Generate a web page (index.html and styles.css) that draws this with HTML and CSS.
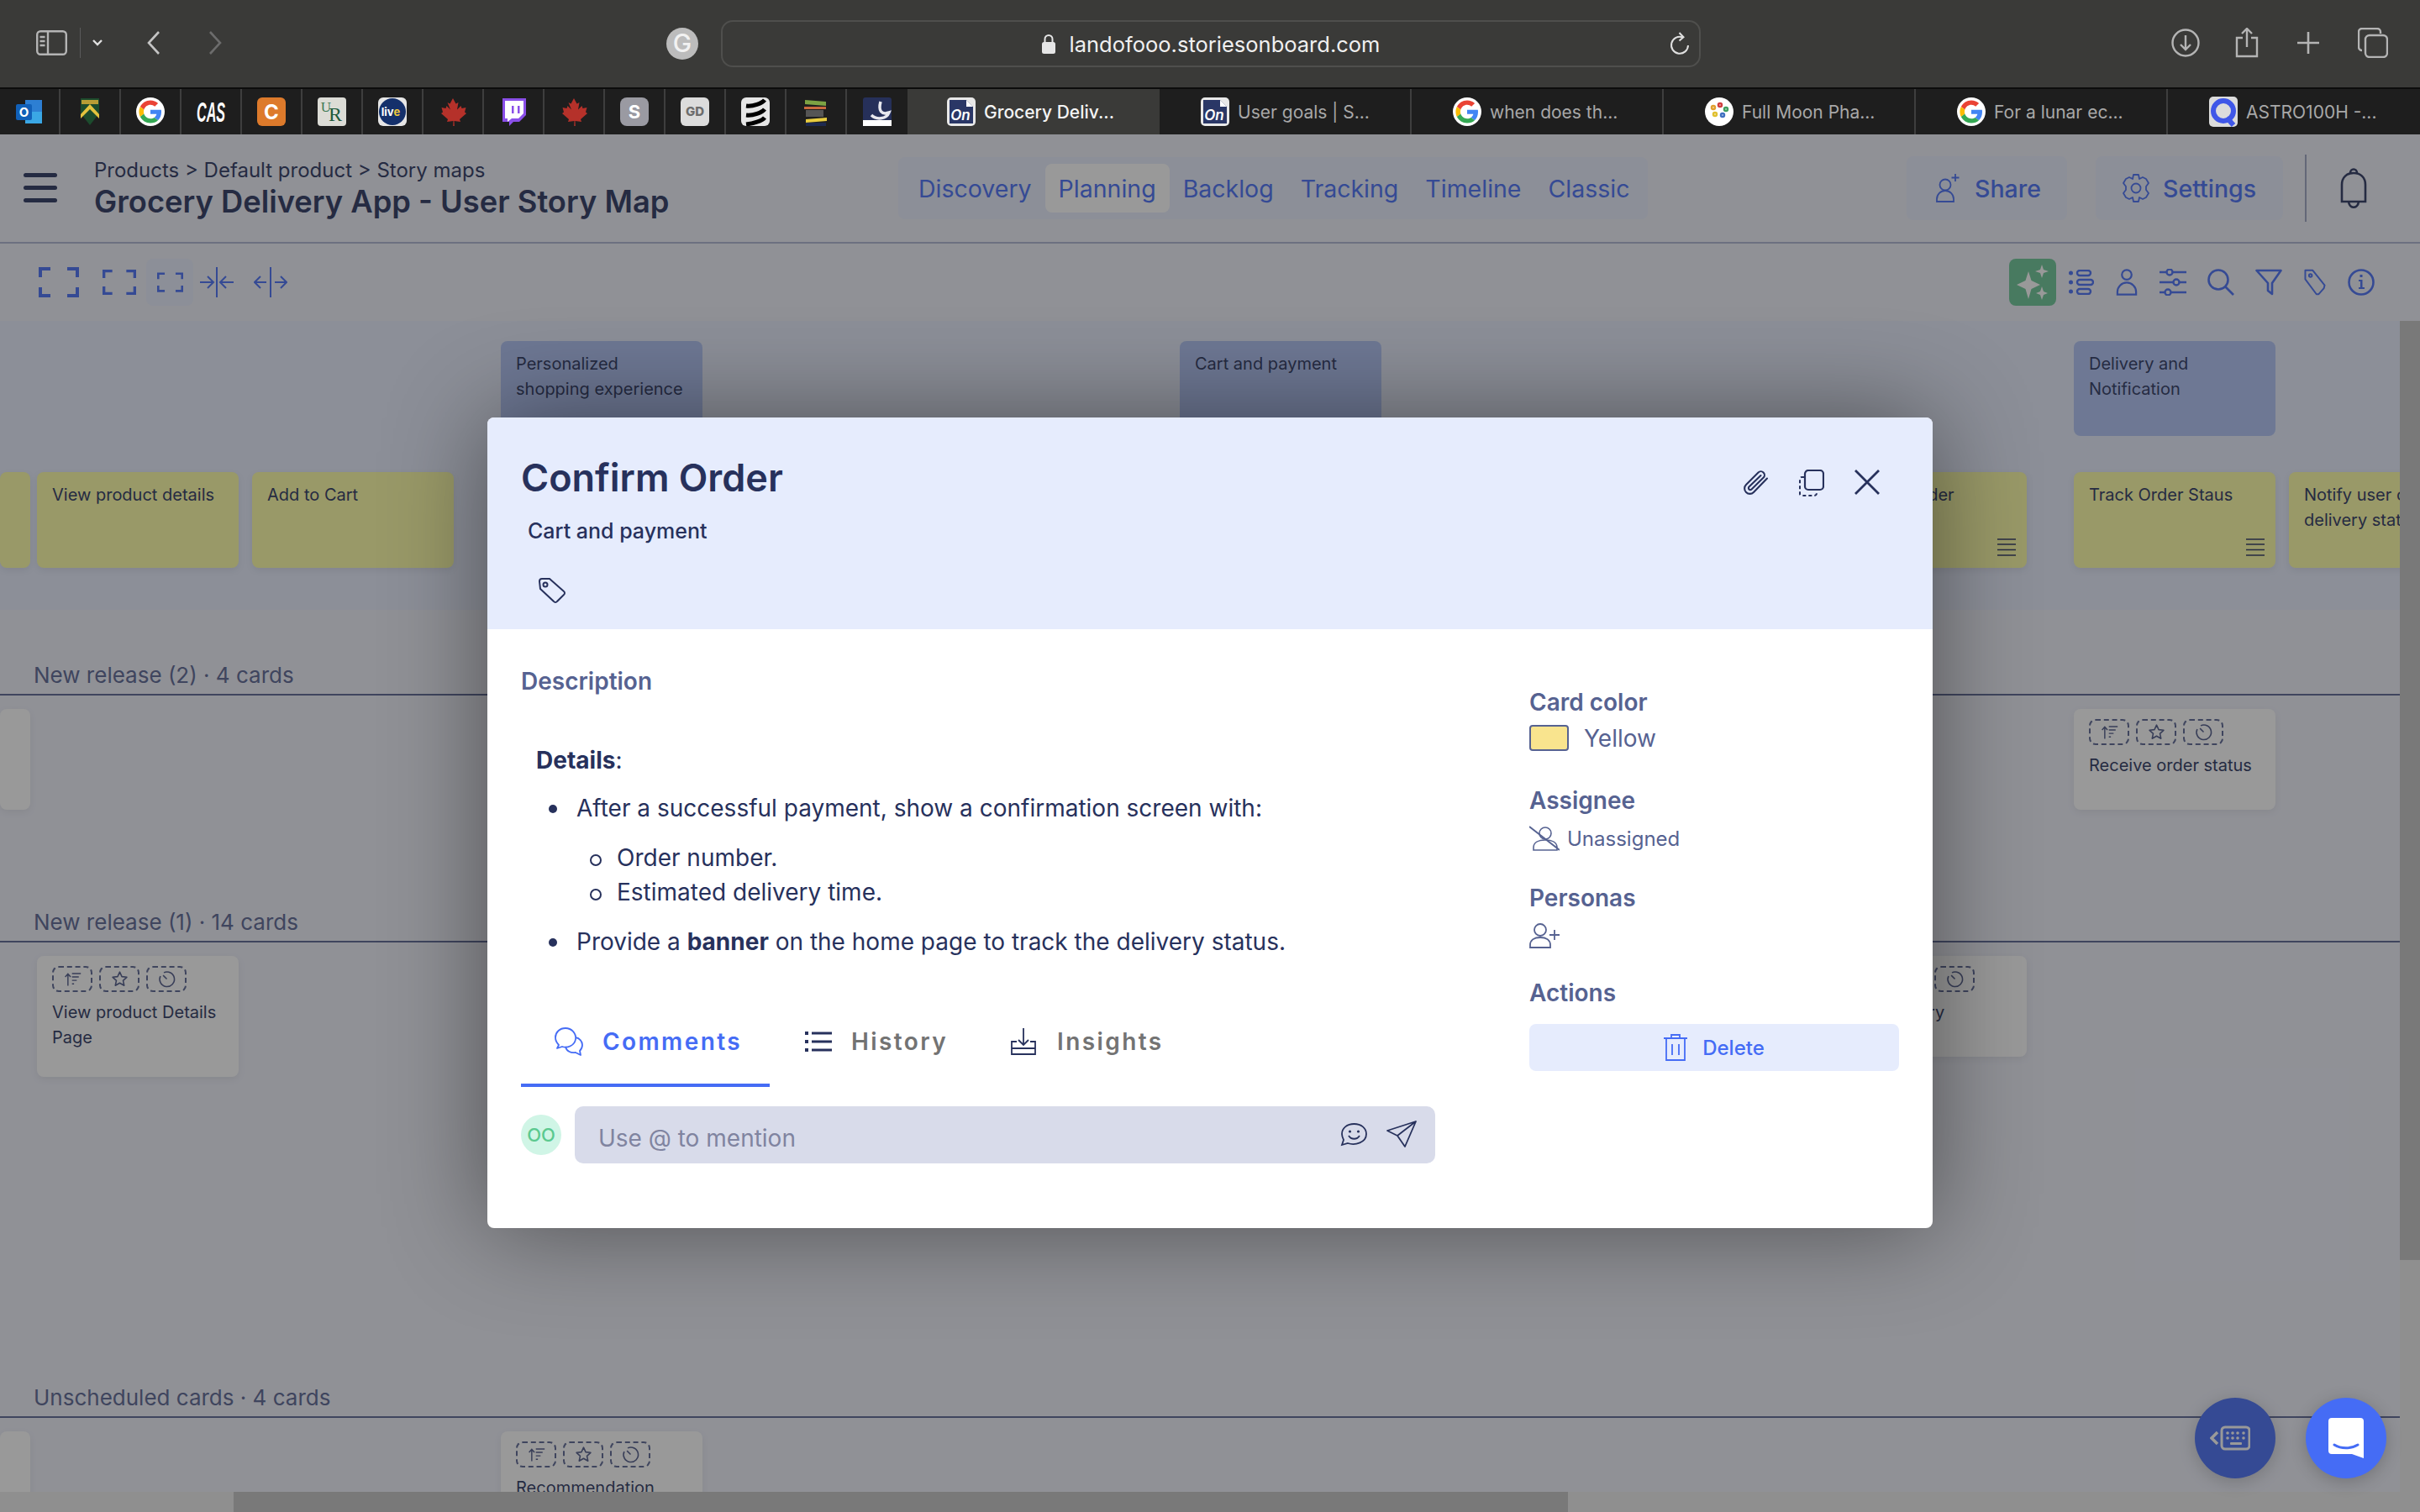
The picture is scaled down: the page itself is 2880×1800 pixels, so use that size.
FILE: index.html
```html
<!DOCTYPE html>
<html lang="en">
<head>
<meta charset="utf-8">
<title>Grocery Delivery App - User Story Map</title>
<link rel="stylesheet" href="styles.css">
</head>
<body>
<svg class="defs" xmlns="http://www.w3.org/2000/svg">
  <symbol id="google" viewBox="-6 -6 60 60"><circle cx="24" cy="24" r="30" fill="#fff"/><path fill="#EA4335" d="M24 9.500c3.540 0 6.710 1.220 9.210 3.600l6.850-6.850C35.900 2.380 30.470 0 24 0 14.620 0 6.510 5.380 2.560 13.220l7.980 6.190C12.430 13.720 17.740 9.500 24 9.500z"/><path fill="#4285F4" d="M46.980 24.550c0-1.570-.15-3.090-.38-4.550H24v9.020h12.940c-.58 2.960-2.260 5.480-4.780 7.180l7.730 6c4.510-4.180 7.090-10.360 7.090-17.65z"/><path fill="#FBBC05" d="M10.530 28.590c-.48-1.450-.76-2.990-.76-4.590s.27-3.140.76-4.590l-7.980-6.190C.92 16.460 0 20.120 0 24c0 3.880.92 7.540 2.560 10.780l7.970-6.190z"/><path fill="#34A853" d="M24 48c6.480 0 11.930-2.130 15.890-5.810l-7.730-6c-2.150 1.450-4.920 2.300-8.160 2.300-6.260 0-11.570-4.220-13.470-9.910l-7.980 6.190C6.510 42.620 14.620 48 24 48z"/></symbol>
  <symbol id="onfav" viewBox="0 0 34 34"><rect width="34" height="34" rx="5" fill="#e8e8e8"/><path d="M3 3h20l8 8v20H3z" fill="#2a3766"/><path d="M23 3l8 8h-8z" fill="#fff"/><text x="16" y="27" font-family="Inter" font-size="17" font-style="italic" font-weight="600" fill="#fff" text-anchor="middle">On</text></symbol>
  <symbol id="maple" viewBox="0 0 34 34"><path fill="#b5312a" d="M17 1l3.500 6.500 3-1.500-1.500 8.500 4.500-4.500 1 3 5-1-1.500 5.500 2 1.500-8 7 1 3-7.500-1 .3 7h-1.600l.3-7-7.500 1 1-3-8-7 2-1.500-1.500-5.500 5 1 1-3 4.500 4.500L10.500 6l3 1.500z"/></symbol>
  <symbol id="chip-sort" viewBox="0 0 26 22"><g fill="none" stroke="currentColor" stroke-width="1.800"><path d="M6 21V4M2 8l4-4.500L10 8"/><path d="M12 3h13M12 8h10M12 13h7M12 18h3"/></g></symbol>
  <symbol id="chip-star" viewBox="0 0 24 24"><path fill="none" stroke="currentColor" stroke-width="1.800" stroke-linejoin="round" d="M12 2.500l2.900 6.200 6.700.8-5 4.600 1.400 6.700-6-3.400-6 3.400 1.400-6.700-5-4.600 6.700-.8z"/></symbol>
  <symbol id="chip-clock" viewBox="0 0 24 24"><g fill="none" stroke="currentColor" stroke-width="1.800"><path d="M8 3.300A10 10 0 1 1 3.300 8"/><path d="M7 7l5 5"/></g></symbol>
  <symbol id="lines" viewBox="0 0 22 21"><path stroke="currentColor" stroke-width="1.500" d="M0 1h22M0 7h22M0 13.500h22M0 20h22"/></symbol>
  <symbol id="brackets" viewBox="0 0 48 36"><g fill="none" stroke="currentColor" stroke-width="4"><path d="M14 2H2v10M34 2h12v10M2 24v10h12M46 24v10H34"/></g></symbol>
  <symbol id="collapse" viewBox="0 0 40 36"><g fill="none" stroke="currentColor" stroke-width="2"><path d="M20 0v36M0 18h15M9 11l7 7-7 7M40 18H25M31 11l-7 7 7 7"/></g></symbol>
  <symbol id="expand" viewBox="0 0 40 36"><g fill="none" stroke="currentColor" stroke-width="2"><path d="M20 0v36M15 18H1M8 11l-7 7 7 7M25 18h14M32 11l7 7-7 7"/></g></symbol>
  <symbol id="person" viewBox="0 0 28 36"><g fill="none" stroke="currentColor" stroke-width="2.500"><circle cx="14" cy="8" r="6.500"/><path d="M1.500 34.500V31a12.500 12.500 0 0 1 25 0v3.500z"/></g></symbol>
  <symbol id="tag" viewBox="0 0 30 36"><g fill="none" stroke="currentColor" stroke-width="2.200" stroke-linejoin="round"><path d="M2 2h10l16 20-1 4-7 8-3 0L2 14z"/><circle cx="9" cy="9" r="2"/></g></symbol>
  <symbol id="close" viewBox="0 0 30 30"><path fill="none" stroke="currentColor" stroke-width="2.800" d="M1 1l28 28M29 1L1 29"/></symbol>
</svg>

<div class="chrome">
  <div class="toolbar-b">
    <div class="tb-left">
      <svg class="ic-sidebar" width="37" height="30" viewBox="0 0 37 30"><g fill="none" stroke="#b4b4b4" stroke-width="2.400"><rect x="1.200" y="1.200" width="34.600" height="27.600" rx="4"/><path d="M14 1v28"/></g><path stroke="#b4b4b4" stroke-width="2.400" d="M4.500 8h6M4.500 13h6M4.500 18h6"/></svg>
      <span class="tb-sep"></span>
      <svg class="ic-caret" width="12" height="8" viewBox="0 0 12 8"><path fill="none" stroke="#e0e0e0" stroke-width="2.400" d="M1 1l5 5 5-5"/></svg>
      <svg class="ic-back" width="16" height="28" viewBox="0 0 16 28"><path fill="none" stroke="#c4c4c4" stroke-width="2.600" d="M14 1L2 14l12 13"/></svg>
      <svg class="ic-fwd" width="16" height="28" viewBox="0 0 16 28"><path fill="none" stroke="#6c6c6c" stroke-width="2.600" d="M2 1l12 13L2 27"/></svg>
    </div>
    <svg class="ic-g" width="38" height="38" viewBox="0 0 38 38"><circle cx="19" cy="19" r="19" fill="#bcbcbc"/><text x="19" y="29" font-family="Inter" font-size="30" font-weight="500" fill="#f2f2f2" text-anchor="middle">G</text></svg>
    <div class="url">
      <span></span>
      <span class="url-mid">
        <svg width="16" height="24" viewBox="0 0 16 24"><path fill="none" stroke="#e6e6e6" stroke-width="2" d="M3.500 11V6.500a4.500 4.500 0 0 1 9 0V11"/><rect y="10" width="16" height="14" rx="2.500" fill="#e6e6e6"/></svg>
        <span>landofooo.storiesonboard.com</span>
      </span>
      <svg class="ic-reload" width="24" height="28" viewBox="0 0 24 28"><g fill="none" stroke="#e0e0e0" stroke-width="2"><path d="M15.500 6.400A10 10 0 1 0 22 16"/><path d="M11.500 1l5 5.200-5 4.300"/></g></svg>
    </div>
    <div class="tb-right">
      <svg width="34" height="34" viewBox="0 0 34 34"><g fill="none" stroke="#b4b4b4" stroke-width="2.400"><circle cx="17" cy="17" r="15.500"/><path d="M17 8v17M11 19l6 6 6-6"/></g></svg>
      <svg width="28" height="36" viewBox="0 0 28 36"><g fill="none" stroke="#b4b4b4" stroke-width="2.400"><path d="M9 12H2v22h24V12h-7"/><path d="M14 23V2M8 7l6-6 6 6"/></g></svg>
      <svg width="28" height="26" viewBox="0 0 28 26"><path stroke="#b4b4b4" stroke-width="2.600" d="M14 0v26M1 13h26"/></svg>
      <svg width="36" height="36" viewBox="0 0 36 36"><g fill="none" stroke="#b4b4b4" stroke-width="2.400"><rect x="9" y="9" width="26" height="26" rx="5"/><path d="M5 27a4 4 0 0 1-4-4V5a4 4 0 0 1 4-4h18a4 4 0 0 1 4 4v2"/></g></svg>
    </div>
  </div>
  <div class="tabbar">
    <span class="pin"><svg width="34" height="34" viewBox="0 0 34 34"><path d="M12 3l20 0v28H12z" fill="#2d7fd3"/><path d="M12 17h20v14H12z" fill="#3aa7e5"/><rect x="1" y="8" width="19" height="19" rx="2" fill="#1160b8"/><text x="10.500" y="23" font-family="Inter" font-size="15" font-weight="700" fill="#fff" text-anchor="middle">O</text></svg></span>
    <span class="pin"><svg width="34" height="34" viewBox="0 0 34 34"><path d="M6 1h22v18l-11 14L6 19z" fill="#1c4b2d"/><path d="M17 8L28 20v5L17 14 6 25v-5z" fill="#e3c23e"/><path d="M7 3h20v5H7z" fill="#b89c35"/></svg></span>
    <span class="pin"><svg width="34" height="34"><use href="#google"/></svg></span>
    <span class="pin"><svg width="36" height="36" viewBox="0 0 36 36"><text x="1" y="30" font-family="Liberation Sans" font-size="34" font-weight="700" font-style="italic" fill="#fff" textLength="34" lengthAdjust="spacingAndGlyphs">CAS</text></svg></span>
    <span class="pin"><svg width="34" height="34" viewBox="0 0 34 34"><rect width="34" height="34" rx="6" fill="#dd7a2b"/><text x="17" y="26" font-family="Inter" font-size="24" font-weight="700" fill="#fff" text-anchor="middle">C</text></svg></span>
    <span class="pin"><svg width="34" height="34" viewBox="0 0 34 34"><rect width="34" height="34" rx="4" fill="#dcdcd6"/><text x="10" y="17" font-family="Liberation Serif" font-size="17" fill="#3d7a55" text-anchor="middle">U</text><text x="21" y="28" font-family="Liberation Serif" font-size="24" fill="#1e5a3a" text-anchor="middle">R</text></svg></span>
    <span class="pin"><svg width="34" height="34" viewBox="0 0 34 34"><rect width="34" height="34" rx="6" fill="#e6e6e6"/><circle cx="17" cy="17" r="16" fill="#14306b"/><text x="15" y="22" font-family="Inter" font-size="13" font-weight="700" fill="#fff" text-anchor="middle">liv<tspan fill="#f0c93a">e</tspan></text></svg></span>
    <span class="pin"><svg width="34" height="34"><use href="#maple"/></svg></span>
    <span class="pin"><svg width="34" height="34" viewBox="0 0 34 34"><path d="M4 1h28v20l-8 8h-7l-5 5v-5H4z" fill="#8a4fe8"/><path d="M7 4h22v15l-6 6H15l-5 4v-4H7z" fill="#fff"/><path d="M15 10h2.500v9H15zM22 10h2.500v9H22z" fill="#8a4fe8"/></svg></span>
    <span class="pin"><svg width="34" height="34"><use href="#maple"/></svg></span>
    <span class="pin"><svg width="34" height="34" viewBox="0 0 34 34"><rect width="34" height="34" rx="8" fill="#9a9aa2"/><text x="17" y="25" font-family="Inter" font-size="22" font-weight="700" fill="#fff" text-anchor="middle">S</text></svg></span>
    <span class="pin"><svg width="34" height="34" viewBox="0 0 34 34"><rect width="34" height="34" rx="6" fill="#dcdcdc"/><text x="17" y="22" font-family="Inter" font-size="15" font-weight="800" fill="#6d6d6d" text-anchor="middle">GD</text></svg></span>
    <span class="pin"><svg width="34" height="34" viewBox="0 0 34 34"><rect width="34" height="34" rx="6" fill="#e6e6e6"/><path fill="none" stroke="#000" stroke-width="5" d="M6 10C14 11 25 7 28 3M6 21c8 1 19-3 22-7M6 32c8-1 19-4 22-8"/></svg></span>
    <span class="pin"><svg width="34" height="34" viewBox="0 0 34 34"><path fill="#7da343" d="M4 3l25 2v5L4 8z"/><path fill="#c96a3e" d="M3 11h26v3H3z"/><path fill="#555" d="M5 15h21v8H5z"/><path fill="#e8cc3f" d="M5 26l25-2v4l-25 2z"/><path fill="#1d2950" d="M5 30h24v4H5z"/></svg></span>
    <span class="pin"><svg width="34" height="34" viewBox="0 0 34 34"><rect width="34" height="34" rx="3" fill="#26305a"/><path fill="none" stroke="#e8e8ee" stroke-width="3.500" d="M21 5c-3 11 1 16 10 13-3 8-15 9-21 3"/><path fill="#fff" d="M0 27h34v7H0z"/></svg></span>
    <span class="tab tab-active"><svg width="34" height="36"><use href="#onfav"/></svg><span>Grocery Deliv...</span></span>
    <span class="tab"><svg width="34" height="36"><use href="#onfav"/></svg><span>User goals | S...</span></span>
    <span class="tab"><svg width="34" height="34"><use href="#google"/></svg><span>when does th...</span></span>
    <span class="tab"><svg width="34" height="34" viewBox="0 0 34 34"><circle cx="17" cy="17" r="17" fill="#fff"/><g fill="none" stroke-width="2.500"><circle cx="10" cy="12" r="2" stroke="#e0a030"/><circle cx="18" cy="9" r="2" stroke="#d04040"/><circle cx="25" cy="14" r="2" stroke="#40a060"/><circle cx="12" cy="20" r="2" stroke="#e0c030"/><circle cx="21" cy="21" r="2" stroke="#4070c0"/></g></svg><span>Full Moon Pha...</span></span>
    <span class="tab"><svg width="34" height="34"><use href="#google"/></svg><span>For a lunar ec...</span></span>
    <span class="tab"><svg width="34" height="36" viewBox="0 0 34 36"><rect width="34" height="36" rx="5" fill="#dcdcdc"/><circle cx="17" cy="17" r="12" fill="none" stroke="#3f57e8" stroke-width="6"/><path d="M21 25l8 9" stroke="#3f57e8" stroke-width="6"/></svg><span>ASTRO100H -...</span></span>
  </div>
</div>

<div class="page">
  <header class="hdr">
    <div class="hdr-left">
      <div class="burger"><span></span><span></span><span></span></div>
      <div class="hdr-titles">
        <div class="crumbs">Products &gt; Default product &gt; Story maps</div>
        <h1 class="map-title">Grocery Delivery App - User Story Map</h1>
      </div>
    </div>
    <nav class="views">
      <span class="view">Discovery</span>
      <span class="view view-on">Planning</span>
      <span class="view">Backlog</span>
      <span class="view">Tracking</span>
      <span class="view">Timeline</span>
      <span class="view">Classic</span>
    </nav>
    <div class="hdr-right">
      <span class="hbtn hbtn-share"><svg width="28" height="34" viewBox="0 0 28 34"><g fill="none" stroke="currentColor" stroke-width="1.800"><circle cx="11" cy="13" r="6.500"/><path d="M1 33v-3a10 10 0 0 1 20 0v3zM23 0v9M18.500 4.500h9"/></g></svg>Share</span>
      <span class="hbtn hbtn-set"><svg width="32" height="34" viewBox="0 0 32 34"><g fill="none" stroke="currentColor" stroke-width="1.800" stroke-linejoin="round"><circle cx="16" cy="17" r="5.500"/><path d="M13 1h6l1 5 4-2 4 2 3 5-3 4v4l3 4-3 5-4 2-4-2-1 5h-6l-1-5-4 2-4-2-3-5 3-4v-4L1 11l3-5 4-2 4 2z"/></g></svg>Settings</span>
      <span class="hdr-div"></span>
      <svg class="bell" width="32" height="48" viewBox="0 0 32 48"><g fill="none" stroke="#27315c" stroke-width="2.600"><path d="M2 40V20C2 11 8 6 16 6s14 5 14 14v20z"/><path d="M12 6c0-6 8-6 8 0M10 40c1 9 11 9 12 0"/></g></svg>
    </div>
  </header>

  <div class="tools">
    <div class="tools-left">
      <svg width="48" height="36"><use href="#brackets"/></svg>
      <svg class="t-b2" width="40" height="30"><use href="#brackets"/></svg>
      <span class="t-hl"><svg width="31" height="24"><use href="#brackets"/></svg></span>
      <svg width="40" height="36"><use href="#collapse"/></svg>
      <svg class="t-ex" width="40" height="36"><use href="#expand"/></svg>
    </div>
    <div class="tools-right">
      <span class="t-ai"><svg width="38" height="42" viewBox="0 0 38 42"><path fill="#fff" d="M14 8l3.500 11L28 24l-10.500 5L14 41l-3.500-12L0 24l10.500-5zM30 0l2 6 6 2-6 2-2 6-2-6-6-2 6-2zM30 26l2 6 5 2-5 2-2 6-2-6-5-2 5-2z"/></svg></span>
      <svg class="t-list" width="30" height="30" viewBox="0 0 30 30"><g fill="none" stroke="currentColor" stroke-width="2.400"><rect x="10" y="1" width="16" height="6" rx="3"/><rect x="10" y="12" width="19" height="6" rx="3"/><rect x="10" y="23" width="16" height="6" rx="3"/></g><g fill="currentColor"><circle cx="2.500" cy="4" r="2.500"/><circle cx="2.500" cy="15" r="2.500"/><circle cx="2.500" cy="26" r="2.500"/></g></svg>
      <svg width="28" height="32"><use href="#person"/></svg>
      <svg width="32" height="32" viewBox="0 0 32 32"><g fill="none" stroke="currentColor" stroke-width="2.400"><path d="M0 4h8M16 4h16M0 16h16M24 16h8M0 28h6M14 28h18"/><circle cx="12" cy="4" r="3.500"/><circle cx="20" cy="16" r="3.500"/><circle cx="10" cy="28" r="3.500"/></g></svg>
      <svg width="32" height="32" viewBox="0 0 32 32"><g fill="none" stroke="currentColor" stroke-width="2.600"><circle cx="13" cy="13" r="11.500"/><path d="M21 21l10 10"/></g></svg>
      <svg width="32" height="32" viewBox="0 0 32 32"><path fill="none" stroke="currentColor" stroke-width="2.600" stroke-linejoin="round" d="M1.500 2h29L20 17v13l-5-4v-9z"/></svg>
      <svg width="28" height="32"><use href="#tag"/></svg>
      <svg width="32" height="32" viewBox="0 0 32 32"><circle cx="16" cy="16" r="14.500" fill="none" stroke="currentColor" stroke-width="2.600"/><path fill="currentColor" d="M14.500 7h3v3h-3zM13 13h4.500v9H20v2h-7v-2h2v-7h-2z"/></svg>
    </div>
  </div>

  <div class="board">
    <div class="viewport">
      <section class="band">
        <div class="cols row-top">
          <div class="card card-blue col-c"><p>Personalized shopping experience</p></div>
          <div class="card card-blue col-d"><p>Cart and payment</p></div>
          <div class="card card-blue col-f"><p>Delivery and Notification</p></div>
        </div>
        <div class="cols row-yellow">
          <div class="card card-yellow col-edge"></div>
          <div class="card card-yellow col-a"><p>View product details</p></div>
          <div class="card card-yellow col-b"><p>Add to Cart</p></div>
          <div class="card card-yellow col-e"><p>Confirm Order</p><svg class="menu" width="22" height="21"><use href="#lines"/></svg></div>
          <div class="card card-yellow col-f"><p>Track Order Staus</p><svg class="menu" width="22" height="21"><use href="#lines"/></svg></div>
          <div class="card card-yellow col-g"><p>Notify user of delivery status</p></div>
        </div>
      </section>

      <section class="rel">
        <h2 class="rel-head">New release (2) · 4 cards</h2>
        <div class="cols rel-body rel-body-a">
          <div class="card card-white col-edge card-h120"></div>
          <div class="card card-white col-f card-h120">
            <div class="chips">
              <span class="chip"><svg width="26" height="22"><use href="#chip-sort"/></svg></span>
              <span class="chip"><svg width="24" height="24"><use href="#chip-star"/></svg></span>
              <span class="chip"><svg width="24" height="24"><use href="#chip-clock"/></svg></span>
            </div>
            <p class="chip-text">Receive order status</p>
          </div>
        </div>
      </section>

      <section class="rel">
        <h2 class="rel-head">New release (1) · 14 cards</h2>
        <div class="cols rel-body rel-body-b">
          <div class="card card-white col-a card-h144">
            <div class="chips">
              <span class="chip"><svg width="26" height="22"><use href="#chip-sort"/></svg></span>
              <span class="chip"><svg width="24" height="24"><use href="#chip-star"/></svg></span>
              <span class="chip"><svg width="24" height="24"><use href="#chip-clock"/></svg></span>
            </div>
            <p class="chip-text">View product Details Page</p>
          </div>
          <div class="card card-white col-e card-h120">
            <div class="chips">
              <span class="chip"><svg width="26" height="22"><use href="#chip-sort"/></svg></span>
              <span class="chip"><svg width="24" height="24"><use href="#chip-star"/></svg></span>
              <span class="chip"><svg width="24" height="24"><use href="#chip-clock"/></svg></span>
            </div>
            <p class="chip-text">Order history</p>
          </div>
        </div>
      </section>

      <section class="rel">
        <h2 class="rel-head">Unscheduled cards · 4 cards</h2>
        <div class="cols rel-body">
          <div class="card card-white col-edge card-h120"></div>
          <div class="card card-white col-c card-h120">
            <div class="chips">
              <span class="chip"><svg width="26" height="22"><use href="#chip-sort"/></svg></span>
              <span class="chip"><svg width="24" height="24"><use href="#chip-star"/></svg></span>
              <span class="chip"><svg width="24" height="24"><use href="#chip-clock"/></svg></span>
            </div>
            <p class="chip-text">Recommendation</p>
          </div>
        </div>
      </section>
    </div>
    <div class="vscroll"><span class="vthumb"></span></div>
    <div class="hscroll"><span class="hthumb"></span></div>
    <span class="corner"></span>
    <span class="fab fab-keys"><svg class="keys-ic" width="48" height="30" viewBox="0 0 48 30"><path fill="none" stroke="#fff" stroke-width="3.500" d="M9 8l-7 7 7 7"/><rect x="14" y="2" width="33" height="26" rx="4" fill="none" stroke="#fff" stroke-width="3"/><g fill="#fff"><circle cx="21" cy="9" r="1.800"/><circle cx="27" cy="9" r="1.800"/><circle cx="33" cy="9" r="1.800"/><circle cx="40" cy="9" r="1.800"/><circle cx="21" cy="15" r="1.800"/><circle cx="27" cy="15" r="1.800"/><circle cx="33" cy="15" r="1.800"/><circle cx="40" cy="15" r="1.800"/><rect x="24" y="20" width="14" height="3" rx="1"/></g></svg></span>
  </div>

  <div class="overlay"></div>

  <article class="modal">
    <div class="m-head">
      <div class="m-head-left">
        <h2 class="m-title">Confirm Order</h2>
        <div class="m-sub">Cart and payment</div>
        <svg class="m-tag" width="34" height="32" viewBox="0 0 34 32"><g fill="none" stroke="#27315c" stroke-width="2"><path d="M2 5a3 3 0 0 1 3-3h9l17 15a2.500 2.500 0 0 1 0 4l-8 8a2.500 2.500 0 0 1-4 0L3 14z"/><circle cx="9" cy="9" r="2.500"/></g></svg>
      </div>
      <div class="m-actions">
        <svg width="32" height="32" viewBox="0 0 32 32"><path fill="none" stroke="#27315c" stroke-width="2.100" stroke-linecap="round" d="M29 10.500L13 27a6.300 6.300 0 0 1-9-9L18.500 3.500a4.300 4.300 0 0 1 6.200 6L10.500 23.500a2.100 2.100 0 0 1-3-3L21.500 7"/></svg>
        <svg width="30" height="32" viewBox="0 0 30 32"><rect x="7" y="1" width="22" height="23" rx="4" fill="none" stroke="#27315c" stroke-width="2.200"/><path fill="none" stroke="#27315c" stroke-width="2" stroke-dasharray="4 3" d="M6 9H3a2 2 0 0 0-2 2v18a2 2 0 0 0 2 2h15a3 3 0 0 0 3-3v-2"/></svg>
        <svg width="30" height="30" class="m-x"><use href="#close"/></svg>
      </div>
    </div>
    <div class="m-body">
      <div class="m-main">
        <h3 class="m-desc">Description</h3>
        <p class="m-details"><strong>Details</strong>:</p>
        <ul class="m-list">
          <li>After a successful payment, show a confirmation screen with:
            <ul>
              <li>Order number.</li>
              <li>Estimated delivery time.</li>
            </ul>
          </li>
          <li>Provide a <strong>banner</strong> on the home page to track the delivery status.</li>
        </ul>
        <div class="m-tabs">
          <span class="m-tab m-tab-on"><svg width="34" height="34" viewBox="0 0 34 34"><g fill="none" stroke="#456cf5" stroke-width="1.800" stroke-linejoin="round"><path d="M13 1C6 1 1 6 1 12c0 4 2 7 4 9l-2 4 6-2c6 2 15-1 16-9 1-7-5-13-12-13z"/><path d="M25 12c5 1 8 5 8 9 0 3-1 5-3 7l1 5-6-3c-6 1-11-2-12-7"/></g></svg>Comments</span>
          <span class="m-tab"><svg width="32" height="24" viewBox="0 0 32 24"><path stroke="#27315c" stroke-width="3" d="M8 2h24M8 12h24M8 22h24"/><path fill="#27315c" d="M0 0h4v4H0zM0 10h4v4H0zM0 20h4v4H0z"/></svg>History</span>
          <span class="m-tab m-tab-ins"><svg width="30" height="32" viewBox="0 0 30 32"><g fill="none" stroke="#27315c" stroke-width="1.800"><path d="M15 0v20M9 14l6 6 6-6"/><path d="M7 16H1v15h28V16h-6M1 24h28"/></g></svg>Insights</span>
        </div>
        <div class="m-compose">
          <span class="avatar">OO</span>
          <div class="compose-box">
            <span class="ph">Use @ to mention</span>
            <svg class="c-emoji" width="33" height="28" viewBox="0 0 33 28"><g fill="none" stroke="#27315c" stroke-width="1.800"><path d="M16.500 1C8 1 2 6 2 13c0 3 1 5 2 7l-2 6 7-2c9 3 22-1 22-11C31 6 25 1 16.500 1z"/><path d="M10 15c3 5 10 5 13 0"/></g><circle cx="11.500" cy="10" r="1.600" fill="#27315c"/><circle cx="21.500" cy="10" r="1.600" fill="#27315c"/></svg>
            <svg class="c-send" width="36" height="32" viewBox="0 0 36 32"><path fill="none" stroke="#27315c" stroke-width="1.800" stroke-linejoin="round" d="M35 1L1 12l12 6 9 13zM35 1L13 18"/></svg>
          </div>
        </div>
      </div>
      <aside class="m-side">
        <h4 class="s-label s-first">Card color</h4>
        <div class="s-color"><span class="swatch"></span><span>Yellow</span></div>
        <h4 class="s-label s-assignee">Assignee</h4>
        <div class="s-assign">
          <svg width="36" height="30" viewBox="0 0 36 30"><g fill="none" stroke="#566291" stroke-width="1.600"><circle cx="19" cy="9" r="7"/><path d="M5 29v-3c0-6 6-9 14-9s14 3 14 9v3z"/><path d="M0 1l36 28" stroke-width="2"/></g></svg>
          <span>Unassigned</span>
        </div>
        <h4 class="s-label s-personas">Personas</h4>
        <svg class="s-persona" width="36" height="30" viewBox="0 0 36 30"><g fill="none" stroke="#566291" stroke-width="1.800"><circle cx="13" cy="8" r="7"/><path d="M1 29v-3c0-6 5-9 12-9s12 3 12 9v3zM30 8v12M24 14h12"/></g></svg>
        <h4 class="s-label s-actions">Actions</h4>
        <button class="s-delete"><svg width="28" height="32" viewBox="0 0 28 32"><g fill="none" stroke="#456cf5" stroke-width="1.800"><path d="M0 5h28M3 5v26h22V5M9 5V1h10v4M10 12v13M18 12v13"/></g></svg>Delete</button>
      </aside>
    </div>
  </article>

  <span class="fab fab-chat"><svg width="42" height="48" viewBox="0 0 42 48"><path fill="#fff" d="M4 0h34a4 4 0 0 1 4 4v44l-14-5H4a4 4 0 0 1-4-4V4a4 4 0 0 1 4-4z"/><path fill="none" stroke="#456cf5" stroke-width="3" stroke-linecap="round" d="M7 32c8 5 20 5 28 0"/></svg></span>
</div>
</body>
</html>
```
FILE: styles.css
```css
* { box-sizing: border-box; }
html, body { margin: 0; padding: 0; }
body {
  width: 2880px; height: 1800px; overflow: hidden;
  display: flex; flex-direction: column;
  font-family: Inter, "Liberation Sans", sans-serif;
  background: #eef0fa; color: #27315c;
}
h1, h2, h3, h4, p { margin: 0; font-weight: inherit; font-size: inherit; }
svg { display: block; flex: none; }
.defs { position: absolute; width: 0; height: 0; }

/* browser chrome */
.chrome { flex: none; height: 160px; background: #3a3a38; }
.toolbar-b { height: 104px; display: flex; align-items: center; }
.tb-left { width: 793px; padding-left: 43px; display: flex; align-items: center; margin-top: -3px; }
.tb-sep { width: 1px; height: 36px; background: #5a5a5a; margin-left: 15px; }
.ic-caret { margin-left: 14px; }
.ic-back { margin-left: 53px; }
.ic-fwd { margin-left: 57px; }
.url {
  margin-left: 27px; width: 1166px; height: 56px;
  border: 2px solid #4f4f4d; border-radius: 14px;
  display: grid; grid-template-columns: 1fr auto 1fr; align-items: center;
  color: #f0f0f0; font-size: 25.500px;
}
.url-mid { display: flex; align-items: center; gap: 17px; }
.ic-reload { justify-self: end; margin-right: 11px; }
.tb-right { display: flex; align-items: center; margin-left: 560px; gap: 42px; margin-top: -2px; }
.tb-right svg:nth-child(3) { margin: 0 3px; }
.tabbar { height: 56px; background: #1e1e1e; border-top: 2px solid #0c0c0c; display: flex; align-items: stretch; }
.pin { width: 72px; border-right: 2px solid #3e3e3e; display: flex; align-items: center; justify-content: center; }
.pin:nth-child(15) { border-right: 0; }
.tab {
  width: 300px; padding-left: 49px; display: flex; align-items: center; gap: 10px;
  color: #a8a8a8; font-size: 21px; border-right: 2px solid #3e3e3e; white-space: nowrap;
}
.tab:last-child { border-right: 0; }
.tab-active { background: #3a3a38; color: #f4f4f4; font-weight: 500; padding-left: 47px; border-right: 0; }

/* page */
.page { position: relative; flex: 1; display: flex; flex-direction: column; overflow: hidden; background: #eef0fa; }
.hdr { flex: none; height: 130px; display: flex; align-items: center; border-bottom: 2px solid #abb2d0; }
.hdr-left { width: 1069px; padding-left: 28px; display: flex; align-items: center; gap: 44px; }
.burger { width: 40px; display: flex; flex-direction: column; gap: 10px; margin-top: -2px; }
.burger span { height: 5px; border-radius: 3px; background: #27315c; }
.crumbs { font-size: 24px; line-height: 32px; color: #27315c; }
.map-title { font-size: 36.300px; line-height: 42px; font-weight: 600; color: #27315c; white-space: nowrap; }
.views { width: 892px; height: 74px; border-radius: 8px; background: #e6ecfd; padding: 0 8px; display: flex; align-items: center; justify-content: space-between; }
.view { height: 58px; padding: 0 16px; display: flex; align-items: center; border-radius: 8px; font-size: 28.500px; color: #456cf5; }
.view-on { background: #fff; }
.hdr-right { margin-left: 308px; display: flex; align-items: center; }
.hbtn { height: 76px; border-radius: 8px; background: #e6ecfd; color: #456cf5; font-size: 28.500px; font-weight: 500; display: flex; align-items: center; gap: 18px; }
.hbtn-share { width: 191px; padding-left: 35px; }
.hbtn-set { width: 223px; padding-left: 32px; margin-left: 34px; gap: 16px; }
.hdr-div { width: 2px; height: 80px; background: #9ba2c0; margin-left: 26px; }
.bell { margin-left: 40px; }

.tools { flex: none; height: 92px; display: flex; align-items: center; color: #456cf5; }
.tools-left { display: flex; align-items: center; padding-left: 46px; }
.t-b2 { margin-left: 28px; }
.t-hl { width: 56px; height: 56px; margin: 0 8px 0 12px; border-radius: 8px; background: #e6ecfd; display: flex; align-items: center; justify-content: center; }
.t-ex { margin-left: 24px; }
.tools-right { margin-left: auto; padding-right: 54px; display: flex; align-items: center; gap: 25px; }
.t-ai { width: 56px; height: 56px; border-radius: 8px; background: #68c594; display: flex; align-items: center; justify-content: center; }
.t-list { margin-left: -10px; }

/* board */
.board { position: relative; flex: 1; min-height: 0; display: grid; grid-template-columns: 1fr 24px; grid-template-rows: 1fr 24px; }
.viewport { overflow: hidden; min-width: 0; }
.vscroll { background: #ececec; }
.vthumb { display: block; height: 1118px; background: #c3c3c3; }
.hscroll { background: #ececec; padding-left: 278px; }
.hthumb { display: block; width: 1588px; height: 24px; background: #c3c3c3; }
.corner { background: #ececec; }

.cols {
  display: grid;
  grid-template-columns: 28px 16px 240px 16px 240px 56px 240px 568px 240px 528px 240px 56px 240px 16px 240px;
  width: 2964px;
}
.band { height: 344px; padding-top: 24px; background: #e6ecfd; }
.row-top { height: 113px; margin-bottom: 43px; }
.row-yellow { height: 114px; }
.col-edge { grid-column: 1; border-radius: 0 8px 8px 0; }
.col-a { grid-column: 3; }
.col-b { grid-column: 5; }
.col-c { grid-column: 7; }
.col-d { grid-column: 9; }
.col-e { grid-column: 11; }
.col-f { grid-column: 13; }
.col-g { grid-column: 15; }
.card { position: relative; border-radius: 8px; font-size: 20px; line-height: 30px; color: #27315c; padding: 12px 18px; grid-row: 1; }
.card-blue { background: #aec2f6; }
.card-yellow { background: #ffffa3; box-shadow: 0 3px 8px rgba(0,0,0,.08); }
.card-white { background: #fff; box-shadow: 0 3px 10px rgba(0,0,0,.07); }
.card-h120 { height: 120px; }
.card-h144 { height: 144px; }
.menu { position: absolute; right: 13px; bottom: 14px; color: #27315c; }

.rel-head { height: 102px; padding: 0 0 6px 40px; display: flex; align-items: flex-end; font-size: 26px; line-height: 32px; font-weight: 400; color: #566291; border-bottom: 2px solid #566291; }
.rel-body { padding-top: 16px; align-items: start; }
.rel-body-a { height: 192px; }
.rel-body-b { height: 464px; }
.chips { display: flex; gap: 8px; }
.chip { width: 48px; height: 31px; border: 2px dashed #566291; border-radius: 8px; display: flex; align-items: center; justify-content: center; color: #4a5585; }
.chip svg { height: 21px; width: 21px; }
.chip-text { margin-top: 9px; }

.overlay { position: absolute; inset: 0; background: rgba(37,37,37,.468); }

/* modal */
.modal {
  position: absolute; left: 580px; top: 337px; width: 1720px; height: 965px;
  background: #fff; border-radius: 8px;
  box-shadow: 0 0 120px rgba(0,0,0,.45);
}
.m-head { height: 252px; background: #e6ecfd; border-radius: 8px 8px 0 0; display: flex; justify-content: space-between; padding: 44px 63px 0 40px; }
.m-title { font-size: 45px; line-height: 56px; font-weight: 600; color: #27315c; }
.m-sub { margin: 19px 0 0 8px; font-size: 25px; line-height: 32px; font-weight: 500; color: #27315c; }
.m-tag { margin: 39px 0 0 20px; }
.m-actions { display: flex; gap: 35px; padding-top: 18px; align-items: flex-start; color: #27315c; }
.m-x { margin-left: 1px; }
.m-body { display: flex; padding: 0 40px; gap: 112px; }
.m-main { width: 1088px; }
.m-desc { margin-top: 46px; font-size: 28px; line-height: 32px; font-weight: 600; color: #566291; }
.m-details { margin: 58px 0 0 18px; font-size: 28px; line-height: 40px; color: #27315c; }
.m-details strong, .m-list strong { font-weight: 700; }
.m-list { margin: 17px 0 0; padding-left: 66px; font-size: 28px; line-height: 41px; color: #27315c; list-style: none; }
.m-list ul { margin: 18px 0 18px; padding-left: 48px; list-style: none; }
.m-list li { position: relative; }
.m-list li::before { content: ""; position: absolute; left: -33px; top: 16px; width: 10px; height: 10px; border-radius: 50%; background: #27315c; }
.m-list ul li::before { left: -32px; background: transparent; border: 2px solid #27315c; }
.m-tabs { margin-top: 56px; height: 96px; display: flex; align-items: flex-start; }
.m-tab { height: 96px; padding: 0 33px 8px 42px; display: flex; align-items: center; gap: 23px; font-size: 28px; font-weight: 600; letter-spacing: 2.400px; color: #737373; border-bottom: 4px solid transparent; }
.m-tab-on { padding-left: 40px; color: #456cf5; border-bottom-color: #456cf5; }
.m-tab-ins { gap: 25px; }
.m-compose { margin-top: 23px; display: flex; align-items: center; gap: 16px; }
.avatar { width: 48px; height: 48px; border-radius: 50%; background: #d0f5e6; color: #5bc98f; font-size: 22px; font-weight: 500; display: flex; align-items: center; justify-content: center; }
.compose-box { flex: 1; height: 68px; border-radius: 10px; background: #d8dbea; display: flex; align-items: center; padding: 0 22px 0 28px; }
.ph { flex: 1; font-size: 28px; padding-top: 8px; color: #8084a0; }
.c-emoji { margin-right: 22px; }
.c-send { margin-top: -2px; }
.m-side { width: 440px; color: #566291; }
.s-label { font-size: 28px; line-height: 32px; font-weight: 600; color: #566291; }
.s-first { margin-top: 71px; }
.s-color { margin-top: 11px; height: 31px; display: flex; align-items: center; gap: 18px; font-size: 28px; }
.swatch { width: 47px; height: 31px; border-radius: 4px; background: #f9e48e; border: 2px solid #566291; }
.s-assignee { margin-top: 43px; }
.s-assign { margin-top: 14px; height: 30px; display: flex; align-items: center; gap: 9px; font-size: 24px; }
.s-personas { margin-top: 40px; }
.s-persona { margin-top: 14px; }
.s-actions { margin-top: 37px; }
.s-delete { margin-top: 21px; width: 440px; height: 56px; border: 0; border-radius: 8px; background: #e6ecfd; color: #456cf5; font: 500 24px Inter, sans-serif; display: flex; align-items: center; justify-content: center; gap: 18px; }

/* floating buttons */
.fab { position: absolute; width: 96px; height: 96px; border-radius: 50%; display: flex; align-items: center; justify-content: center; box-shadow: 0 4px 20px rgba(0,0,0,.2); }
.fab-keys { right: 172px; bottom: 40px; background: #456cf5; }
.keys-ic { margin-right: 12px; }
.fab-chat { right: 40px; bottom: 40px; background: #456cf5; }
```
